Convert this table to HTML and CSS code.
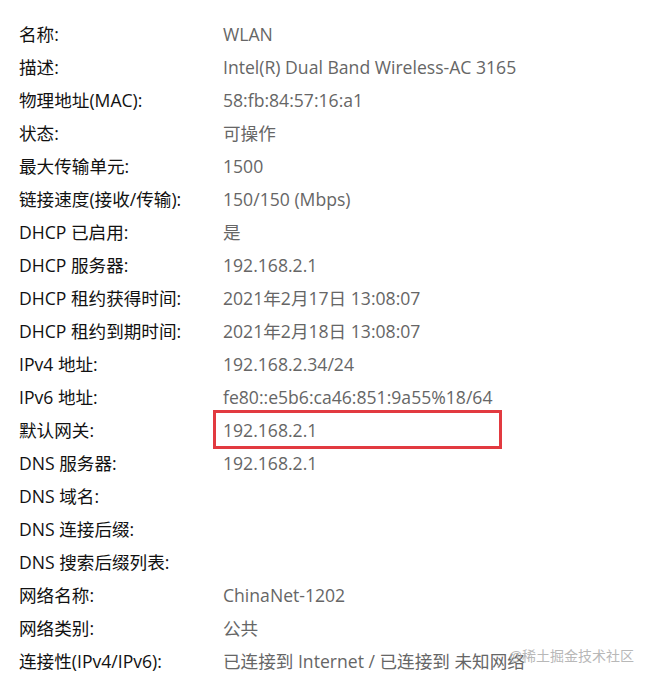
FILE: index.html
```html
<!DOCTYPE html>
<html lang="zh-CN">
<head>
  <meta charset="UTF-8">
  <title>WLAN 网络连接详细信息</title>
  <link rel="stylesheet" href="styles.css">
</head>
<body>
  <!-- Properties list -->
  <div class="props">
    <div class="row"><span class="key">名称:</span><span class="val">WLAN</span></div>
    <div class="row"><span class="key">描述:</span><span class="val">Intel(R) Dual Band Wireless-AC 3165</span></div>
    <div class="row"><span class="key">物理地址(MAC):</span><span class="val">58:fb:84:57:16:a1</span></div>
    <div class="row"><span class="key">状态:</span><span class="val">可操作</span></div>
    <div class="row"><span class="key">最大传输单元:</span><span class="val">1500</span></div>
    <div class="row"><span class="key">链接速度(接收/传输):</span><span class="val">150/150 (Mbps)</span></div>
    <div class="row"><span class="key">DHCP 已启用:</span><span class="val">是</span></div>
    <div class="row"><span class="key">DHCP 服务器:</span><span class="val">192.168.2.1</span></div>
    <div class="row"><span class="key">DHCP 租约获得时间:</span><span class="val">2021年2月17日 13:08:07</span></div>
    <div class="row"><span class="key">DHCP 租约到期时间:</span><span class="val">2021年2月18日 13:08:07</span></div>
    <div class="row"><span class="key">IPv4 地址:</span><span class="val">192.168.2.34/24</span></div>
    <div class="row"><span class="key">IPv6 地址:</span><span class="val">fe80::e5b6:ca46:851:9a55%18/64</span></div>
    <div class="row"><span class="key">默认网关:</span><span class="val marked">192.168.2.1</span></div>
    <div class="row"><span class="key">DNS 服务器:</span><span class="val">192.168.2.1</span></div>
    <div class="row"><span class="key">DNS 域名:</span><span class="val"></span></div>
    <div class="row"><span class="key">DNS 连接后缀:</span><span class="val"></span></div>
    <div class="row"><span class="key">DNS 搜索后缀列表:</span><span class="val"></span></div>
    <div class="row"><span class="key">网络名称:</span><span class="val">ChinaNet-1202</span></div>
    <div class="row"><span class="key">网络类别:</span><span class="val">公共</span></div>
    <div class="row"><span class="key">连接性(IPv4/IPv6):</span><span class="val">已连接到 Internet / 已连接到 未知网络</span></div>
  </div>

  <!-- Watermark -->
  <div class="watermark">@稀土掘金技术社区</div>
</body>
</html>
```

FILE: styles.css
```css
body {
  font-family: "Open Sans", "Noto Sans CJK SC", sans-serif;
  font-size: 17.6px;
  background: #fff;
  margin: 0;
  padding: 17px 0 0 19px;
  position: relative;
  height: 665px;
  overflow: hidden;
}

.props {
  display: flex;
  flex-direction: column;
}

.row {
  display: flex;
  align-items: center;
  height: 33px;
  white-space: nowrap;
}

.key {
  width: 204px;
  color: #111;
}

.val {
  color: #666;
}

.val.marked {
  display: flex;
  align-items: center;
  margin-left: -10px;
  padding-left: 7px;
  width: 276px;
  height: 33px;
  border: 3px solid #e23a40;
}

.watermark {
  position: absolute;
  right: 18px;
  bottom: 17px;
  font-size: 14px;
  color: #b8b8b8;
}
```
